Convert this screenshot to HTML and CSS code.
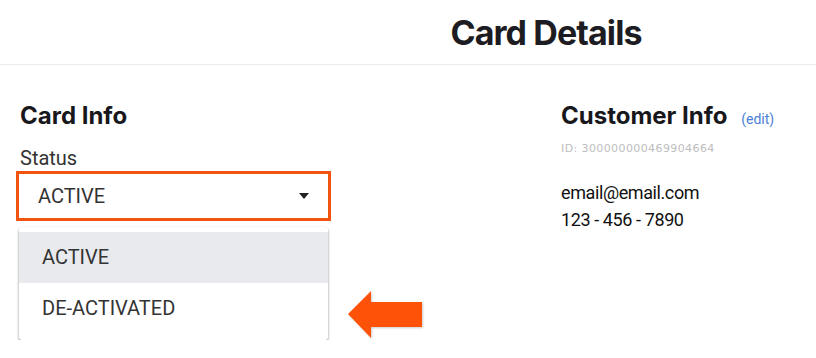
FILE: index.html
```html
<!DOCTYPE html>
<html lang="en">

<head>
  <meta charset="UTF-8">
  <title>Card Details</title>
  <link rel="stylesheet" href="styles.css">
</head>

<body>
  <div class="header">
    <h1>Card Details</h1>
  </div>
  <div class="main">
    <div class="card-info">
      <h2>Card Info</h2>
      <div class="label">Status</div>
      <div class="select">
        <span>ACTIVE</span>
        <span class="caret"></span>
      </div>
      <div class="menu-row">
        <ul class="menu">
          <li class="selected">ACTIVE</li>
          <li>DE-ACTIVATED</li>
        </ul>
        <svg class="pointer" width="76" height="50" viewBox="0 0 76 50">
          <polygon points="1,24 24,1 24,12 75,12 75,37 24,37 24,48" fill="#ff5209" />
        </svg>
      </div>
    </div>
    <div class="customer-info">
      <h2>Customer Info <a class="edit" href="#">(edit)</a></h2>
      <div class="cust-id">ID: 300000000469904664</div>
      <div class="contact">
        <div>email@email.com</div>
        <div>123 - 456 - 7890</div>
      </div>
    </div>
  </div>
</body>

</html>
```

FILE: styles.css
```css
body {
  margin: 0;
  font-family: 'Roboto', sans-serif;
  color: #1a1a1a;
  background: #fff;
}

.header {
  height: 64px;
  border-bottom: 1px solid #ebebeb;
  padding-left: 276px;
  text-align: center;
}

.header h1 {
  margin: 0;
  padding-top: 13px;
  font-family: 'Inter', sans-serif;
  font-size: 34px;
  font-weight: 700;
  letter-spacing: -0.9px;
  line-height: 40px;
  color: #1c1c22;
}

.main {
  display: flex;
  padding: 36px 0 0 20px;
}

h2 {
  margin: 0;
  font-family: 'Inter', sans-serif;
  font-size: 24px;
  font-weight: 700;
  line-height: 30px;
  color: #18181c;
}

.card-info {
  width: 541px;
}

.label {
  margin-top: 15px;
  font-size: 20px;
  line-height: 24px;
  color: #333;
}

.select {
  box-sizing: border-box;
  display: flex;
  align-items: center;
  justify-content: space-between;
  width: 315px;
  height: 50px;
  margin: 1px 0 0 -4px;
  padding: 0 19px 0 19px;
  border: 3px solid #f0540f;
  font-size: 20px;
  color: #333;
}

.caret {
  width: 0;
  height: 0;
  border-left: 5px solid transparent;
  border-right: 5px solid transparent;
  border-top: 6px solid #222;
}

.menu-row {
  display: flex;
  align-items: flex-end;
  margin-top: 6px;
}

.menu {
  width: 309px;
  margin: 0 0 0 -1px;
  padding: 5px 0 6px;
  list-style: none;
  background: #fff;
  border-radius: 3px;
  box-shadow: 0 2px 3px rgba(0, 0, 0, 0.4), 0 0 2px rgba(0, 0, 0, 0.08);
}

.menu li {
  height: 51px;
  padding-left: 23px;
  line-height: 51px;
  font-size: 20px;
  color: #333;
}

.menu li.selected {
  background: #e9eaee;
}

.pointer {
  display: block;
  margin: 0 0 0 19px;
  filter: drop-shadow(1px 1px 1px rgba(0, 0, 0, 0.2));
}

.customer-info h2 {
  white-space: nowrap;
}

.edit {
  margin-left: 8px;
  font-family: 'Roboto', sans-serif;
  font-size: 14px;
  font-weight: 400;
  color: #4b7fd6;
  text-decoration: none;
}

.cust-id {
  margin-top: 7px;
  font-family: 'DejaVu Sans', sans-serif;
  font-size: 11px;
  letter-spacing: 0.4px;
  line-height: 16px;
  color: #bdbdbd;
}

.contact {
  margin-top: 22px;
  font-size: 18px;
  letter-spacing: -0.4px;
  line-height: 27px;
  color: #111;
}
```
